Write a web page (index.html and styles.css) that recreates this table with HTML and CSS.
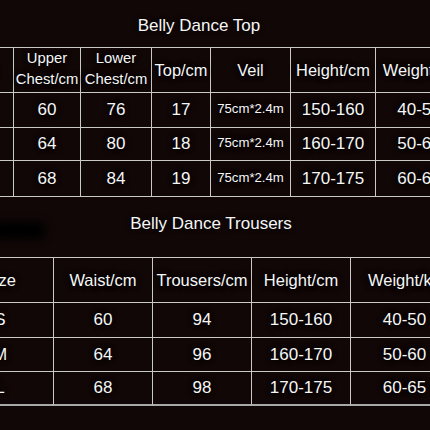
FILE: index.html
```html
<!DOCTYPE html>
<html>
<head>
<meta charset="utf-8">
<link rel="stylesheet" href="styles.css">
</head>
<body>
<div class="page">
  <h2 class="title title-top">Belly Dance Top</h2>
  <div class="grid grid-top">
    <div class="cell head">Size</div>
    <div class="cell head small">Upper<br>Chest/cm</div>
    <div class="cell head small">Lower<br>Chest/cm</div>
    <div class="cell head">Top/cm</div>
    <div class="cell head">Veil</div>
    <div class="cell head">Height/cm</div>
    <div class="cell head">Weight/kg</div>

    <div class="cell num">S</div>
    <div class="cell num">60</div>
    <div class="cell num">76</div>
    <div class="cell num">17</div>
    <div class="cell veil">75cm*2.4m</div>
    <div class="cell num">150-160</div>
    <div class="cell num">40-50</div>

    <div class="cell num">M</div>
    <div class="cell num">64</div>
    <div class="cell num">80</div>
    <div class="cell num">18</div>
    <div class="cell veil">75cm*2.4m</div>
    <div class="cell num">160-170</div>
    <div class="cell num">50-60</div>

    <div class="cell num">L</div>
    <div class="cell num">68</div>
    <div class="cell num">84</div>
    <div class="cell num">19</div>
    <div class="cell veil">75cm*2.4m</div>
    <div class="cell num">170-175</div>
    <div class="cell num">60-65</div>
  </div>

  <h2 class="title title-bottom">Belly Dance Trousers</h2>
  <div class="grid grid-bottom">
    <div class="cell head">Size</div>
    <div class="cell head">Waist/cm</div>
    <div class="cell head">Trousers/cm</div>
    <div class="cell head">Height/cm</div>
    <div class="cell head">Weight/kg</div>

    <div class="cell num">S</div>
    <div class="cell num">60</div>
    <div class="cell num">94</div>
    <div class="cell num">150-160</div>
    <div class="cell num">40-50</div>

    <div class="cell num">M</div>
    <div class="cell num">64</div>
    <div class="cell num">96</div>
    <div class="cell num">160-170</div>
    <div class="cell num">50-60</div>

    <div class="cell num">L</div>
    <div class="cell num">68</div>
    <div class="cell num">98</div>
    <div class="cell num">170-175</div>
    <div class="cell num">60-65</div>
  </div>
</div>
</body>
</html>
```

FILE: styles.css
```css
html, body {
  margin: 0;
  padding: 0;
  background: #110707;
  overflow: hidden;
}

.page {
  width: 430px;
  height: 430px;
  overflow: hidden;
  padding-top: 16px;
  box-sizing: border-box;
  font-family: "Liberation Sans", Arial, sans-serif;
  color: #f6f6f6;
}

.title {
  margin: 0;
  font-size: 17px;
  font-weight: normal;
  line-height: 20px;
  height: 20px;
  text-align: center;
  text-shadow: 0 0 5px #000;
}

.title-top {
  padding-right: 32px;
}

.title-bottom {
  position: relative;
  margin-top: 17px;
  padding-right: 8px;
}

.title-bottom::before {
  content: "";
  position: absolute;
  left: -8px;
  top: 8px;
  width: 54px;
  height: 17px;
  border-radius: 9px;
  background: #000;
  filter: blur(4px);
}

.grid {
  display: grid;
  border-top: 1px solid #c9c9c9;
}

.grid-top {
  margin-top: 11px;
  margin-left: -50px;
  grid-template-columns: 64px 67px 71px 59px 80px 85px 87px;
  grid-template-rows: 45px 35px 33px 36px;
}

.grid-bottom {
  margin-top: 23px;
  margin-left: -53px;
  grid-template-columns: 107px 99px 99px 99px 108px;
  grid-template-rows: 45px 35px 34px 34px;
}

.grid-bottom .cell:nth-last-child(-n+5) {
  border-bottom: 2px solid #a8a8a8;
}

.cell {
  box-sizing: border-box;
  border-right: 1px solid #c9c9c9;
  border-bottom: 1px solid #c9c9c9;
  display: flex;
  align-items: center;
  justify-content: center;
  text-align: center;
  white-space: nowrap;
  text-shadow: 0 0 4px #000, 0 0 6px #000;
}

.head {
  font-size: 16.4px;
  line-height: 21px;
}

.head.small {
  font-size: 14.8px;
  line-height: 21px;
  padding-bottom: 2px;
}

.grid-bottom .head {
  font-size: 16.5px;
}

.num {
  font-size: 17px;
}

.veil {
  font-size: 13.2px;
  padding-bottom: 3px;
}
```
